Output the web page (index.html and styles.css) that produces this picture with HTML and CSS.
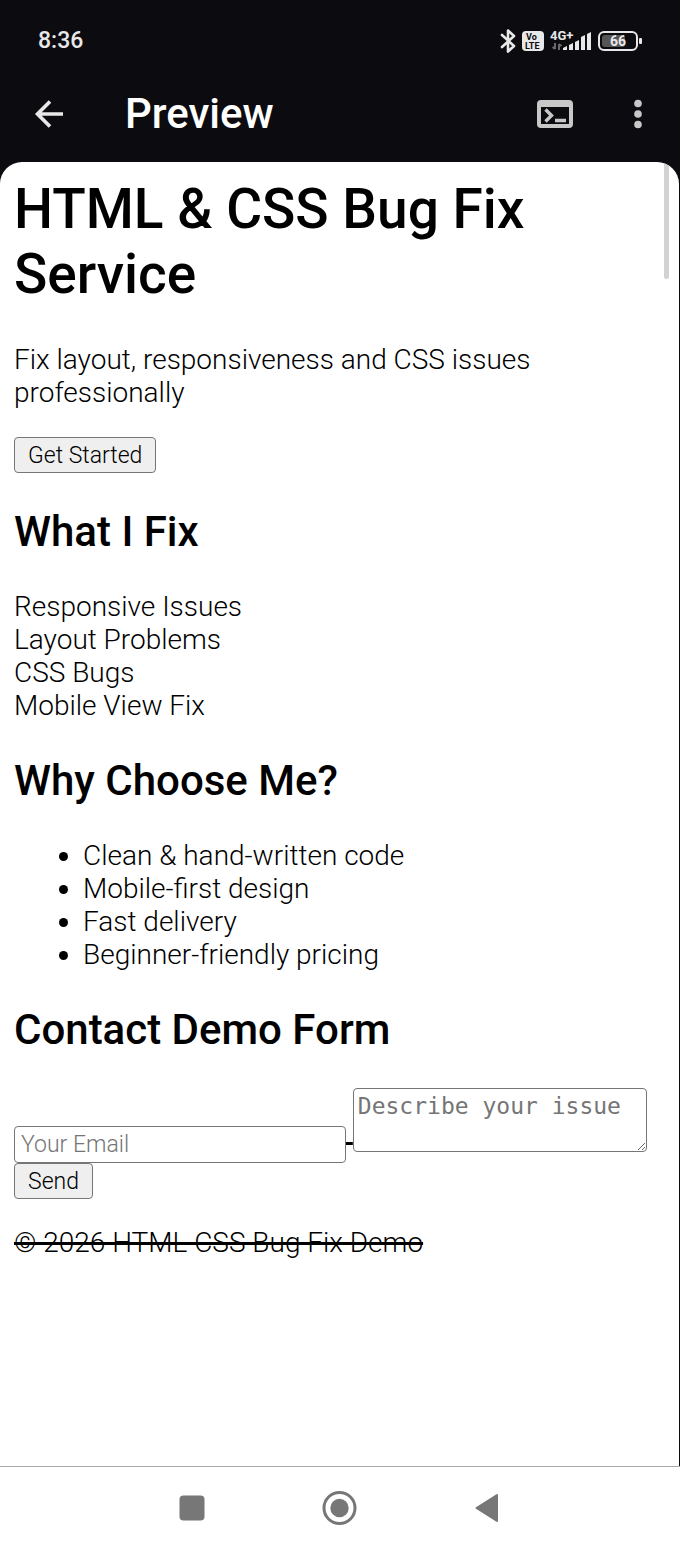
FILE: index.html
```html
<!DOCTYPE html>
<html lang="en">
<head>
  <meta charset="UTF-8">
  <meta name="viewport" content="width=device-width, initial-scale=1.0">
  <title>Preview</title>
  <link rel="stylesheet" href="styles.css">
</head>
<body>
  <div class="status-bar">
    <span class="clock">8:36</span>
    <div class="status-icons">
      <svg width="16" height="26" viewBox="0 0 16 26" fill="none" stroke="#e8e8e8" stroke-width="2.6" stroke-linejoin="round" stroke-linecap="round">
        <path d="M2 7 L14 18 L8 23.500 V2.500 L14 8 L2 19"/>
      </svg>
      <svg width="22" height="20" viewBox="0 0 22 20">
        <rect width="22" height="20" rx="4" fill="#e8e8e8"/>
        <g class="icon-text" fill="#0c0c10" font-size="9">
          <text x="4" y="9">Vo</text>
          <text x="3" y="18">LTE</text>
        </g>
      </svg>
      <svg width="42" height="28" viewBox="0 0 42 28" fill="#e8e8e8">
        <text class="icon-text" x="0" y="13" font-size="13">4G+</text>
        <path d="M13 23h4v-4l-4 2zM19 23h4v-7l-4 2zM25 23h4v-10l-4 2zM31 23h4v-15l-4 2zM37 23h4v-18l-4 2z"/>
        <path d="M5 16v6M2.500 20l2.500 2M9 23v-6M11.500 19l-2.500-2" fill="none" stroke="#6a6a6a" stroke-width="2"/>
      </svg>
      <svg width="46" height="20" viewBox="0 0 46 20">
        <rect x="4" y="4" width="23" height="12" rx="3" fill="#555"/>
        <rect x="1" y="1" width="38" height="18" rx="5" fill="none" stroke="#e8e8e8" stroke-width="2"/>
        <rect x="41" y="7" width="3" height="6" rx="1" fill="#e8e8e8"/>
        <text class="icon-text" x="20" y="15" font-size="14" text-anchor="middle" fill="#e8e8e8">66</text>
      </svg>
    </div>
  </div>

  <header class="app-bar">
    <button class="icon-btn" aria-label="Back">
      <svg width="30" height="30" viewBox="0 0 30 30" fill="none" stroke="#e8e8e8" stroke-width="3.6">
        <path d="M30 15H4M17 2.500L4.500 15L17 27.500"/>
      </svg>
    </button>
    <span class="app-title">Preview</span>
    <button class="icon-btn" aria-label="Console">
      <svg width="36" height="30" viewBox="0 0 36 30">
        <path fill="#c8c8c8" fill-rule="evenodd" d="M4 1h28a4 4 0 0 1 4 4v20a4 4 0 0 1-4 4H4a4 4 0 0 1-4-4V5a4 4 0 0 1 4-4zM4 8v17h28V8z"/>
        <path fill="none" stroke="#c8c8c8" stroke-width="3.4" d="M8.500 10.500l6 6L8.500 22.500M18 21.500h11"/>
      </svg>
    </button>
    <button class="icon-btn menu-btn" aria-label="More options">
      <svg width="8" height="30" viewBox="0 0 8 30" fill="#c8c8c8">
        <circle cx="4" cy="4.500" r="3.800"/>
        <circle cx="4" cy="15" r="3.800"/>
        <circle cx="4" cy="25.500" r="3.800"/>
      </svg>
    </button>
  </header>

  <main class="page">
    <div class="scroll-thumb"></div>

    <h1>HTML &amp; CSS Bug Fix Service</h1>
    <p>Fix layout, responsiveness and CSS issues professionally</p>
    <button class="btn">Get Started</button>

    <h2>What I Fix</h2>
    <div>Responsive Issues</div>
    <div>Layout Problems</div>
    <div>CSS Bugs</div>
    <div>Mobile View Fix</div>

    <h2>Why Choose Me?</h2>
    <ul>
      <li>Clean &amp; hand-written code</li>
      <li>Mobile-first design</li>
      <li>Fast delivery</li>
      <li>Beginner-friendly pricing</li>
    </ul>

    <h2>Contact Demo Form</h2>
    <form>
      <s>
        <input type="email" class="email" placeholder="Your Email" aria-label="Your Email">
        <textarea class="issue" placeholder="Describe your issue" aria-label="Describe your issue"></textarea>
        <button type="button" class="btn">Send</button>
      </s>
    </form>

    <footer><s>© 2026 HTML CSS Bug Fix Demo</s></footer>
  </main>

  <nav class="nav-bar">
    <button class="icon-btn" aria-label="Recent apps">
      <svg width="36" height="36" viewBox="0 0 36 36"><rect x="5.500" y="5.500" width="25" height="25" rx="4" fill="#777"/></svg>
    </button>
    <button class="icon-btn" aria-label="Home">
      <svg width="36" height="36" viewBox="0 0 36 36">
        <circle cx="17.500" cy="18" r="15.500" fill="none" stroke="#777" stroke-width="3"/>
        <circle cx="17.500" cy="18" r="9.200" fill="#777"/>
      </svg>
    </button>
    <button class="icon-btn" aria-label="Go back">
      <svg width="36" height="36" viewBox="0 0 36 36"><path d="M6.500 18L27 5v26z" fill="#777" stroke="#777" stroke-width="2" stroke-linejoin="round"/></svg>
    </button>
  </nav>
</body>
</html>
```
FILE: styles.css
```css
* { box-sizing: border-box; }
body { margin: 0; min-height: 100vh; display: flex; flex-direction: column; background: #0c0c10; color: #000; font-family: Roboto, sans-serif; font-size: 28px; font-weight: 300; line-height: 33px; }
svg { display: block; }

/* phone chrome */
.status-bar { display: flex; justify-content: space-between; align-items: center; padding: 27px 36px 11px 38px; line-height: 28px; }
.clock { color: #e8e8e8; font-size: 23px; font-weight: 500; }
.status-icons { display: flex; align-items: center; gap: 6px; }
.icon-text { font-family: Roboto, sans-serif; font-weight: 700; }
.app-bar { display: flex; align-items: center; padding: 24px 38px 24px 33px; line-height: 48px; }
.app-title { flex: 1; margin-left: 62px; color: #fff; font-size: 42px; font-weight: 500; }
.icon-btn { background: none; border: none; padding: 0; cursor: pointer; }
.menu-btn { margin-left: 61px; }
.nav-bar { display: flex; justify-content: center; gap: 112px; padding: 23px 0; background: #fff; border-top: 1px solid #aaa; }

/* previewed page */
.page { flex: 1; position: relative; overflow: hidden; margin-right: 1px; padding: 15px 14px; background: #fff; border-radius: 22px 22px 0 0; }
.scroll-thumb { position: absolute; top: 0; right: 10px; width: 5px; height: 117px; background: #d2d2d2; border-radius: 3px; }
h1 { margin: 0 0 36px; font-size: 55px; font-weight: 500; line-height: 65px; }
h2 { margin: 34px 0; font-size: 42px; font-weight: 500; line-height: 49px; }
p { margin: 0 0 28px; }
ul { margin: 34px 0; padding-left: 69px; }
s { text-decoration-thickness: 3px; }
.btn { height: 36px; padding: 0 13px; background: #efefef; border: 1px solid #767676; border-radius: 4px; color: #000; font-family: inherit; font-size: 23px; font-weight: 300; vertical-align: top; }
.email { width: 332px; height: 37px; padding: 0 6px; border: 1px solid #767676; border-radius: 4px; font-family: inherit; font-size: 23px; font-weight: 300; }
.issue { width: 294px; height: 64px; padding: 4px; border: 1px solid #767676; border-radius: 4px; font-family: "DejaVu Sans Mono", monospace; font-size: 23px; line-height: 27px; }
.email::placeholder, .issue::placeholder { color: #757575; }
footer { margin-top: 27px; }
```
